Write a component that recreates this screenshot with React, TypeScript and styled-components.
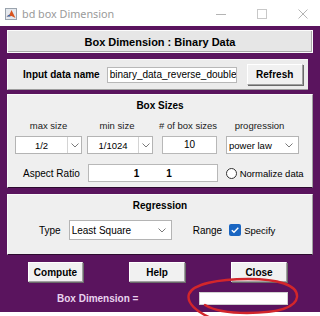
import styled, { createGlobalStyle } from 'styled-components';

const GlobalStyle = createGlobalStyle`
  html, body {
    margin: 0;
    padding: 0;
    background: #ffffff;
  }
  body {
    font-family: "Liberation Sans", Arial, sans-serif;
    color: #000;
  }
  * {
    box-sizing: border-box;
  }
`;

const purple = '#5a145e';

function Chevron() {
  return (
    <svg width="8" height="5" viewBox="0 0 8 5">
      <polyline points="0.5,0.5 4,4 7.5,0.5" fill="none" stroke="#7a7a7a" strokeWidth="1" />
    </svg>
  );
}

function MatlabIcon() {
  return (
    <svg width="12" height="12" viewBox="0 0 12 12">
      <rect x="0.5" y="0.5" width="11" height="11" fill="#e4e8ee" stroke="#9aa3ad" />
      <path d="M1.5 8.5 L4.5 6.5 L6.5 2 L8 5 L10.5 10 L6.5 8 Z" fill="#d9541e" />
      <path d="M1.5 8.5 L4.5 6.5 L5.5 8.5 Z" fill="#2f6db5" />
    </svg>
  );
}

export default function App() {
  return (
    <>
      <GlobalStyle />
      <Window>
        <TitleBar>
          <MatlabIcon />
          <TitleText>bd box Dimension</TitleText>
          <WinControls>
            <WinButton>
              <svg width="10" height="10" viewBox="0 0 10 10">
                <line x1="0" y1="5.5" x2="10" y2="5.5" stroke="#b4b4b4" />
              </svg>
            </WinButton>
            <WinButton>
              <svg width="10" height="10" viewBox="0 0 10 10">
                <rect x="0.5" y="0.5" width="9" height="9" fill="none" stroke="#c8c8c8" />
              </svg>
            </WinButton>
            <WinButton>
              <svg width="10" height="10" viewBox="0 0 10 10">
                <path d="M0.5 0.5 L9.5 9.5 M9.5 0.5 L0.5 9.5" stroke="#b4b4b4" />
              </svg>
            </WinButton>
          </WinControls>
        </TitleBar>

        <Body>
          <HeaderPanel>Box Dimension : Binary Data</HeaderPanel>

          <InputPanel>
            <BoldLabel>Input data name</BoldLabel>
            <EditField $w={130} $ml={7} $h={16} $align="left">
              binary_data_reverse_double
            </EditField>
            <PushButton $w={56} $ml={10} $h={21}>Refresh</PushButton>
          </InputPanel>

          <GroupPanel $mt={4} $h={94}>
            <GroupTitle>Box Sizes</GroupTitle>
            <ColumnRow $mt={8}>
              <SmallLabel $w={67} $ml={0}>max size</SmallLabel>
              <SmallLabel $w={66} $ml={2}>min size</SmallLabel>
              <SmallLabel $w={55} $ml={9}>
                # of box sizes
              </SmallLabel>
              <SmallLabel $w={73} $ml={9}>progression</SmallLabel>
            </ColumnRow>
            <ColumnRow $mt={4}>
              <ComboBox $w={67} $ml={0}>
                <ComboText>1/2</ComboText>
                <ComboArrow>
                  <Chevron />
                </ComboArrow>
              </ComboBox>
              <ComboBox $w={66} $ml={5}>
                <ComboText>1/1024</ComboText>
                <ComboArrow>
                  <Chevron />
                </ComboArrow>
              </ComboBox>
              <EditField $w={55} $ml={9} $h={18} $align="center">
                10
              </EditField>
              <PopupMenu $w={73} $ml={9}>
                <span>power law</span>
                <Chevron />
              </PopupMenu>
            </ColumnRow>
            <AspectRow>
              <PlainLabel>Aspect Ratio</PlainLabel>
              <RatioField>
                <span>1</span>
                <span>1</span>
              </RatioField>
              <Radio />
              <OptionText>Normalize data</OptionText>
            </AspectRow>
          </GroupPanel>

          <GroupPanel $mt={6} $h={61}>
            <GroupTitle>Regression</GroupTitle>
            <RegressionRow>
              <PlainLabel>Type</PlainLabel>
              <PopupMenu $w={103} $ml={8} $h={20}>
                <span>Least Square</span>
                <Chevron />
              </PopupMenu>
              <RangeLabel>Range</RangeLabel>
              <CheckBox>
                <svg width="12" height="12" viewBox="0 0 12 12">
                  <path d="M2.8 6.2 L5 8.3 L9.3 3.8" fill="none" stroke="#fff" strokeWidth="1.4" />
                </svg>
              </CheckBox>
              <OptionText>Specify</OptionText>
            </RegressionRow>
          </GroupPanel>

          <ButtonRow>
            <PushButton $w={55} $ml={21} $h={20}>Compute</PushButton>
            <PushButton $w={56} $ml={46} $h={20}>Help</PushButton>
            <PushButton $w={56} $ml={46} $h={20}>Close</PushButton>
          </ButtonRow>

          <ResultRow>
            <ResultLabel>Box Dimension =</ResultLabel>
            <ResultField />
          </ResultRow>
        </Body>

        <Annotation width="320" height="316" viewBox="0 0 320 316">
          <path
            d="M211 318 C197 312 186 303 189 294 C193 284 218 279 248 279 C278 279 298 285 297 297 C296 308 276 313 247 313 C229 313 215 311 205 305"
            fill="none"
            stroke="#d3262b"
            strokeWidth="2.4"
            strokeLinecap="round"
          />
        </Annotation>
      </Window>
    </>
  );
}

const Window = styled.div`
  position: relative;
  width: 320px;
  height: 316px;
  background: #ffffff;
  overflow: hidden;
`;

const TitleBar = styled.div`
  height: 26px;
  display: flex;
  align-items: center;
  padding-left: 5px;
  padding-top: 1px;
`;

const TitleText = styled.span`
  margin-left: 5px;
  font-family: "Noto Sans", "Open Sans", sans-serif;
  font-size: 10.8px;
  color: #9a9a9a;
`;

const WinControls = styled.div`
  margin-left: auto;
  padding-right: 2px;
  display: flex;
  gap: 11px;
`;

const WinButton = styled.div`
  width: 30px;
  height: 20px;
  display: flex;
  align-items: center;
  justify-content: center;
`;

const Body = styled.div`
  height: 286px;
  background: ${purple};
  padding: 4px 7px 0 7px;
  display: flex;
  flex-direction: column;
`;

const HeaderPanel = styled.div`
  height: 23px;
  background: #e6e6e6;
  border: 1px solid #fbfbfb;
  box-shadow: inset -1px -1px 0 #a9a9a9;
  display: flex;
  align-items: center;
  justify-content: center;
  font-size: 11px;
  font-weight: bold;
`;

const InputPanel = styled.div`
  margin-top: 6px;
  margin-right: 5px;
  height: 31px;
  background: #ececec;
  border-top: 1px solid #fafafa;
  border-left: 1px solid #fafafa;
  border-bottom: 1px solid #9c9c9c;
  display: flex;
  align-items: center;
  padding-left: 15px;
`;

const BoldLabel = styled.span`
  font-size: 10px;
  font-weight: bold;
`;

const EditField = styled.div<{ $w: number; $ml: number; $h: number; $align: 'left' | 'center' }>`
  width: ${(p) => p.$w}px;
  height: ${(p) => p.$h}px;
  margin-left: ${(p) => p.$ml}px;
  background: #fff;
  border: 1px solid #b8b8b8;
  font-size: 10px;
  line-height: ${(p) => p.$h - 2}px;
  padding: 0 2px;
  white-space: nowrap;
  overflow: hidden;
  text-align: ${(p) => p.$align};
`;

const PushButton = styled.div<{ $w: number; $ml: number; $h: number }>`
  width: ${(p) => p.$w}px;
  height: ${(p) => p.$h}px;
  margin-left: ${(p) => p.$ml}px;
  background: #f1f1f1;
  border-top: 1px solid #ffffff;
  border-left: 1px solid #ffffff;
  border-right: 1px solid #a0a0a0;
  border-bottom: 1px solid #a0a0a0;
  box-shadow: 1px 1px 0 #6a6a6a;
  display: flex;
  align-items: center;
  justify-content: center;
  font-size: 10px;
  font-weight: bold;
`;

const GroupPanel = styled.div<{ $mt: number; $h: number }>`
  margin-top: ${(p) => p.$mt}px;
  height: ${(p) => p.$h}px;
  background: #efefef;
  border-top: 1px solid #fafafa;
  border-left: 1px solid #fafafa;
  border-bottom: 1px solid #2c0a2e;
  border-right: 1px solid #a0a0a0;
  display: flex;
  flex-direction: column;
  padding-top: 5px;
`;

const GroupTitle = styled.div`
  text-align: center;
  font-size: 10px;
  font-weight: bold;
  line-height: 12px;
`;

const ColumnRow = styled.div<{ $mt: number }>`
  margin-top: ${(p) => p.$mt}px;
  display: flex;
  align-items: center;
  padding-left: 7px;
`;

const SmallLabel = styled.div<{ $w: number; $ml: number }>`
  width: ${(p) => p.$w}px;
  margin-left: ${(p) => p.$ml}px;
  text-align: center;
  font-size: 9.5px;
  line-height: 12px;
  color: #1a1a1a;
  white-space: nowrap;
`;

const ComboBox = styled.div<{ $w: number; $ml: number }>`
  width: ${(p) => p.$w}px;
  height: 18px;
  margin-left: ${(p) => p.$ml}px;
  background: #fff;
  border: 1px solid #b4b4b4;
  display: flex;
`;

const ComboText = styled.div`
  flex: 1;
  display: flex;
  align-items: center;
  justify-content: center;
  font-size: 9.5px;
`;

const ComboArrow = styled.div`
  width: 14px;
  border-left: 1px solid #d4d4d4;
  display: flex;
  align-items: center;
  justify-content: center;
`;

const PopupMenu = styled.div<{ $w: number; $ml: number; $h?: number }>`
  width: ${(p) => p.$w}px;
  height: ${(p) => p.$h ?? 18}px;
  margin-left: ${(p) => p.$ml}px;
  background: #fff;
  border: 1px solid #b4b4b4;
  display: flex;
  align-items: center;
  justify-content: space-between;
  padding: 0 5px 0 2px;
  font-size: ${(p) => (p.$h ? 10 : 9.5)}px;
`;

const AspectRow = styled.div`
  margin-top: 10px;
  height: 18px;
  display: flex;
  align-items: center;
  padding-left: 15px;
`;

const PlainLabel = styled.span`
  font-size: 10px;
`;

const RatioField = styled.div`
  width: 130px;
  height: 18px;
  margin-left: 8px;
  background: #fff;
  border: 1px solid #b8b8b8;
  display: flex;
  align-items: center;
  justify-content: center;
  gap: 27px;
  font-size: 10px;
  font-weight: bold;
`;

const Radio = styled.div`
  width: 11px;
  height: 11px;
  margin-left: 8px;
  border: 1px solid #333;
  border-radius: 50%;
  background: #fff;
`;

const OptionText = styled.span`
  margin-left: 3px;
  font-size: 9.5px;
`;

const RegressionRow = styled.div`
  margin-top: 8px;
  height: 20px;
  display: flex;
  align-items: center;
  padding-left: 31px;
`;

const RangeLabel = styled.span`
  margin-left: 21px;
  font-size: 10px;
`;

const CheckBox = styled.div`
  width: 12px;
  height: 12px;
  margin-left: 7px;
  border-radius: 2px;
  background: #1a66c2;
  display: flex;
`;

const ButtonRow = styled.div`
  margin-top: 7px;
  display: flex;
`;

const ResultRow = styled.div`
  margin-top: 10px;
  height: 13px;
  display: flex;
  align-items: center;
`;

const ResultLabel = styled.span`
  margin-left: 50px;
  width: 81px;
  font-size: 10px;
  font-weight: bold;
  color: #e9d3ee;
  white-space: nowrap;
`;

const ResultField = styled.div`
  margin-left: 61px;
  width: 89px;
  height: 13px;
  background: #fff;
  border: 1px solid #d0d0d0;
`;

const Annotation = styled.svg`
  position: absolute;
  left: 0;
  top: 0;
  pointer-events: none;
`;
